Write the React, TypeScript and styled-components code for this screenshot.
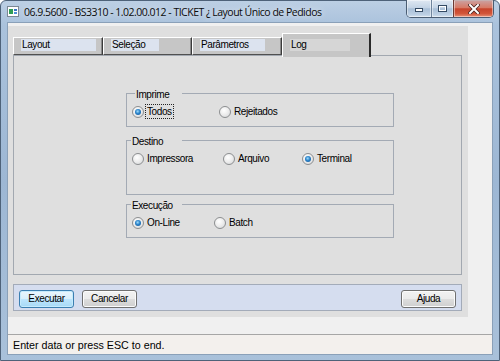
import React from "react";
import styled, { createGlobalStyle } from "styled-components";

const Global = createGlobalStyle`
  html, body { margin: 0; padding: 0; width: 500px; height: 361px; overflow: hidden; background: #ffffff; }
  #root { width: 500px; height: 361px; }
  * { box-sizing: border-box; }
`;

const FORM_FONT = `"Liberation Sans", Arial, sans-serif`;

const Window = styled.div`
  width: 500px;
  height: 361px;
  display: flex;
  flex-direction: column;
  padding: 0 6px 5px 6px;
  border: 1px solid #4e6279;
  border-radius: 6px 6px 0 0;
  background: linear-gradient(to bottom, #bccfe4 0px, #aac2dc 24px, #9db7d4 180px, #a9c1da 361px);
`;

const TitleBar = styled.div`
  height: 21px;
  display: flex;
  align-items: center;
  gap: 5px;
`;

const TitleText = styled.span`
  font-family: "Open Sans", "Noto Sans", sans-serif;
  font-size: 10.5px;
  letter-spacing: -0.5px;
  color: #0b0b0b;
  white-space: nowrap;
  text-shadow: 0 0 6px rgba(255, 255, 255, 0.9);
  flex: 1;
`;

const CaptionButtons = styled.div`
  align-self: flex-start;
  margin-top: -1px;
  margin-right: -1px;
  display: flex;
  height: 18px;
  border: 1px solid #4a5d73;
  border-top: none;
  border-radius: 0 0 5px 5px;
  overflow: hidden;
`;

const CapBtn = styled.div<{ $w: number; $close?: boolean }>`
  width: ${(p) => p.$w}px;
  height: 100%;
  display: flex;
  align-items: center;
  justify-content: center;
  border-left: ${(p) => (p.$close ? "1px solid #6b3a34" : "1px solid #6f849c")};
  box-shadow: inset 0 0 0 1px rgba(255, 255, 255, 0.45);
  background: ${(p) =>
    p.$close
      ? "linear-gradient(to bottom, #eaa494 0%, #d9786480 0%, #d77a66 45%, #c7442c 52%, #d2563a 80%, #e8937a 100%)"
      : "linear-gradient(to bottom, #dfe8f2 0%, #c4d4e6 45%, #a9bfd7 52%, #bccfe3 85%, #d3e1ef 100%)"};
  &:first-child {
    border-left: none;
  }
`;

const Client = styled.div`
  flex: 1;
  display: flex;
  flex-direction: column;
  background: #f0f0f0;
  border: 1px solid #8aa0b8;
`;

const MainArea = styled.div`
  margin: 3px 24px 0 0;
  background: #dfdfdf;
  padding: 7px 6px 6px 5px;
  display: flex;
  flex-direction: column;
`;

const TabRow = styled.div`
  height: 22px;
  display: flex;
  align-items: flex-end;
`;

const Tab = styled.div<{ $w: number; $active?: boolean }>`
  position: relative;
  z-index: ${(p) => (p.$active ? 2 : 1)};
  width: ${(p) => p.$w}px;
  height: ${(p) => (p.$active ? 24 : 18)}px;
  margin-bottom: ${(p) => (p.$active ? -2 : 0)}px;
  background: #c6c6c6;
  border-top: 1px solid #ffffff;
  border-left: 1px solid #ffffff;
  border-right: ${(p) => (p.$active ? "2px solid #2a2a2a" : "1px solid #3a3a3a")};
  border-bottom: ${(p) => (p.$active ? "none" : "1px solid #505050")};
  box-shadow: ${(p) => (p.$active ? "none" : "inset -1px 0 0 #8a8a8a")};
  padding: ${(p) => (p.$active ? "5px 0 0 7px" : "1px 0 0 7px")};
`;

const TabLabel = styled.div<{ $w: number; $active?: boolean }>`
  width: ${(p) => p.$w}px;
  height: 12px;
  background: ${(p) => (p.$active ? "#d6d6d6" : "#dce3ef")};
  font-family: ${FORM_FONT};
  font-size: 10px;
  letter-spacing: -0.4px;
  line-height: 12px;
  color: #000;
  padding-left: 1px;
  white-space: nowrap;
`;

const Panel = styled.div`
  height: 220px;
  border: 1px solid #a2a8b0;
  background: #dfdfdf;
  padding: 37px 0 0 112px;
  display: flex;
  flex-direction: column;
`;

const Group = styled.div<{ $h: number; $mt: number }>`
  position: relative;
  width: 268px;
  height: ${(p) => p.$h}px;
  margin-top: ${(p) => p.$mt}px;
  border: 1px solid #a3aab4;
  padding: 10px 0 0 5px;
`;

const Legend = styled.span<{ $left: number }>`
  position: absolute;
  top: -6px;
  left: ${(p) => p.$left}px;
  width: ${(p) => 55 - p.$left}px;
  height: 13px;
  background: #dfdfdf;
  font-family: ${FORM_FONT};
  font-size: 10px;
  letter-spacing: -0.4px;
  line-height: 13px;
  color: #000;
  padding-left: 1px;
  white-space: nowrap;
`;

const RadioRow = styled.div<{ $cols: string }>`
  display: grid;
  grid-template-columns: ${(p) => p.$cols};
  align-items: center;
  height: 15px;
`;

const Option = styled.label`
  display: inline-flex;
  align-items: center;
  gap: 1px;
`;

const Radio = styled.span<{ $on?: boolean }>`
  width: 12px;
  height: 12px;
  border-radius: 50%;
  border: 1px solid #8c8e90;
  background: radial-gradient(circle at 40% 35%, #ffffff 0%, #eeeeee 45%, #d2d4d6 100%);
  display: flex;
  align-items: center;
  justify-content: center;
  &::after {
    content: "";
    display: ${(p) => (p.$on ? "block" : "none")};
    width: 6px;
    height: 6px;
    border-radius: 50%;
    background: radial-gradient(circle at 45% 40%, #9fdcfb 0%, #2a82c9 45%, #0f4f8f 100%);
  }
`;

const OptText = styled.span<{ $focus?: boolean }>`
  font-family: ${FORM_FONT};
  font-size: 10px;
  letter-spacing: -0.4px;
  line-height: 13px;
  color: #000;
  padding: 0 1px;
  border: 1px ${(p) => (p.$focus ? "dotted #222" : "solid transparent")};
  white-space: nowrap;
`;

const ButtonBar = styled.div`
  margin-top: 9px;
  height: 27px;
  border: 1px solid #a3abb9;
  background: #d5ddef;
  padding: 5px 5px 0 5px;
  display: flex;
  align-items: flex-start;
`;

const Button = styled.button<{ $focus?: boolean; $right?: boolean; $gap?: boolean }>`
  width: 55px;
  height: 18px;
  margin-left: ${(p) => (p.$right ? "auto" : p.$gap ? "8px" : "0")};
  padding: 0;
  border-radius: 3px;
  border: 1px solid ${(p) => (p.$focus ? "#3c7fb1" : "#707070")};
  box-shadow: inset 0 0 0 1px ${(p) => (p.$focus ? "#c6ebfc" : "#fbfbfb")};
  background: ${(p) =>
    p.$focus
      ? "linear-gradient(to bottom, #eaf6fd 0%, #d9f0fc 50%, #bee6fd 51%, #a7d9f5 100%)"
      : "linear-gradient(to bottom, #f2f2f2 0%, #ebebeb 50%, #dddddd 51%, #cfcfcf 100%)"};
  font-family: ${FORM_FONT};
  font-size: 10px;
  letter-spacing: -0.4px;
  line-height: 14px;
  color: #000;
`;

const Spacer = styled.div`
  height: 17px;
`;

const StatusBar = styled.div`
  flex: 1;
  border-top: 1px solid #a6a6a6;
  background: #f3f0ed;
  display: flex;
  align-items: center;
  padding-left: 5px;
  font-family: "Liberation Sans", Arial, sans-serif;
  font-size: 10.7px;
  color: #000;
`;

const AppIcon = () => (
  <svg width="12" height="11" viewBox="0 0 12 11">
    <rect x="0.5" y="0.5" width="11" height="10" fill="#ffffff" stroke="#7b8794" />
    <rect x="2" y="3" width="4" height="5" fill="#2f9d55" />
    <rect x="7" y="3" width="3" height="2" fill="#3a74c4" />
    <rect x="7" y="6" width="3" height="2" fill="#4f8fd8" />
  </svg>
);

const MinIcon = () => (
  <svg width="10" height="6" viewBox="0 0 10 6">
    <rect x="1.5" y="2.5" width="7" height="3" fill="#ffffff" stroke="#344a63" />
  </svg>
);

const MaxIcon = () => (
  <svg width="11" height="9" viewBox="0 0 11 9">
    <rect x="1.5" y="1.5" width="8" height="6" fill="none" stroke="#344a63" strokeWidth="1" />
    <rect x="2.5" y="2.5" width="6" height="4" fill="none" stroke="#ffffff" strokeWidth="1" />
  </svg>
);

const CloseIcon = () => (
  <svg width="12" height="10" viewBox="0 0 12 10">
    <path d="M2 1 L10 9 M10 1 L2 9" stroke="#4a2420" strokeWidth="3.6" strokeLinecap="square" />
    <path d="M2 1 L10 9 M10 1 L2 9" stroke="#ffffff" strokeWidth="2" strokeLinecap="square" />
  </svg>
);

const tabs = [
  { label: "Layout", w: 90, box: 75 },
  { label: "Seleção", w: 89, box: 48 },
  { label: "Parâmetros", w: 90, box: 65 },
  { label: "Log", w: 89, box: 60, active: true },
];

type Opt = { label: string; on?: boolean; focus?: boolean };
const groups: { title: string; left: number; h: number; mt: number; cols: string; opts: Opt[] }[] = [
  {
    title: "Imprime",
    left: 8,
    h: 34,
    mt: 0,
    cols: "87px auto",
    opts: [{ label: "Todos", on: true, focus: true }, { label: "Rejeitados" }],
  },
  {
    title: "Destino",
    left: 4,
    h: 55,
    mt: 13,
    cols: "91px 79px auto",
    opts: [{ label: "Impressora" }, { label: "Arquivo" }, { label: "Terminal", on: true }],
  },
  {
    title: "Execução",
    left: 4,
    h: 34,
    mt: 9,
    cols: "82px auto",
    opts: [{ label: "On-Line", on: true }, { label: "Batch" }],
  },
];

export default function App() {
  return (
    <>
      <Global />
      <Window>
        <TitleBar>
          <AppIcon />
          <TitleText>06.9.5600 - BS3310 - 1.02.00.012 - TICKET ¿ Layout Único de Pedidos</TitleText>
          <CaptionButtons>
            <CapBtn $w={24}>
              <MinIcon />
            </CapBtn>
            <CapBtn $w={22}>
              <MaxIcon />
            </CapBtn>
            <CapBtn $w={40} $close>
              <CloseIcon />
            </CapBtn>
          </CaptionButtons>
        </TitleBar>
        <Client>
          <MainArea>
            <TabRow>
              {tabs.map((t) => (
                <Tab key={t.label} $w={t.w} $active={t.active}>
                  <TabLabel $w={t.box} $active={t.active}>
                    {t.label}
                  </TabLabel>
                </Tab>
              ))}
            </TabRow>
            <Panel>
              {groups.map((g) => (
                <Group key={g.title} $h={g.h} $mt={g.mt}>
                  <Legend $left={g.left}>{g.title}</Legend>
                  <RadioRow $cols={g.cols}>
                    {g.opts.map((o) => (
                      <Option key={o.label}>
                        <Radio $on={o.on} />
                        <OptText $focus={o.focus}>{o.label}</OptText>
                      </Option>
                    ))}
                  </RadioRow>
                </Group>
              ))}
            </Panel>
            <ButtonBar>
              <Button $focus>Executar</Button>
              <Button $gap>Cancelar</Button>
              <Button $right>Ajuda</Button>
            </ButtonBar>
          </MainArea>
          <Spacer />
          <StatusBar>Enter data or press ESC to end.</StatusBar>
        </Client>
      </Window>
    </>
  );
}
